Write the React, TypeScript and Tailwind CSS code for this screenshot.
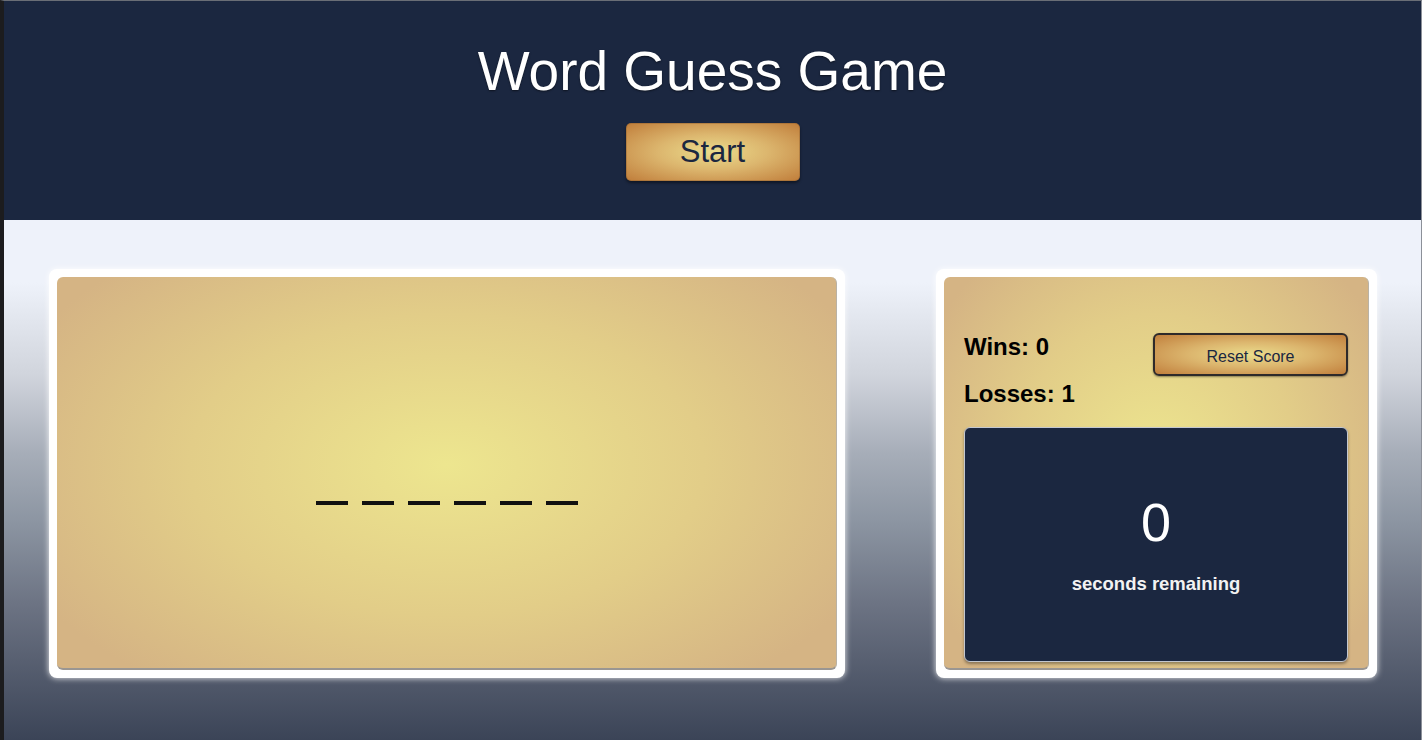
import { useState } from 'react';

const goldButton =
  'bg-[radial-gradient(ellipse_at_center,#ebdc8c_0%,#dcb66e_45%,#c17f3c_100%)]';

const panelGold =
  'bg-[radial-gradient(ellipse_60%_70%_at_50%_48%,#ede68f_0%,#e2cd88_55%,#d5b484_100%)]';

const App = () => {
  const [wins] = useState(0);
  const [losses] = useState(1);
  const [seconds] = useState(0);
  const letters = ['', '', '', '', '', ''];

  return (
    <div className="h-[740px] w-full overflow-hidden border-l-4 border-l-[#1c1c1e] border-t border-t-[#6a6e76] border-r border-r-[#8c9099] font-['Liberation_Sans',Arial,sans-serif] flex flex-col">
      {/* Header */}
      <header className="h-[219px] shrink-0 bg-[#1b2740] flex flex-col items-center pt-[39px]">
        <h1 className="text-[55px] leading-[1.15] text-white [text-shadow:0_1px_2px_rgba(0,0,0,0.5)]">
          Word Guess Game
        </h1>
        <button
          className={`mt-[20px] w-[174px] h-[58px] rounded-[5px] ${goldButton} text-[31px] text-[#1b2740] shadow-[0_2px_3px_rgba(0,0,0,0.45)] border border-[#8a5a2a]/40`}
        >
          Start
        </button>
      </header>

      {/* Body */}
      <main className="flex-1 bg-[linear-gradient(to_bottom,#eef2fa_0%,#eef2fa_12%,#d0d4dc_30%,#a6adb8_45%,#8c95a2_58%,#6c7383_74%,#3b4457_100%)] flex gap-[91px] pl-[45px] pr-[44px] pt-[49px]">
        {/* Word panel */}
        <div className="w-[796px] h-[409px] bg-white rounded-[8px] p-[8px] shadow-[0_0_6px_rgba(255,255,255,0.9)]">
          <div className={`h-full rounded-[6px] ${panelGold} border-b-2 border-b-[#9a9692] border-r border-r-[#b9b2a6] flex items-center justify-center`}>
            <div className="mt-[60px] flex gap-[14px]">
              {letters.map((l, i) => (
                <span key={i} className="w-[32px] h-[4px] bg-[#111111]">
                  {l}
                </span>
              ))}
            </div>
          </div>
        </div>

        {/* Score panel */}
        <div className="w-[441px] h-[409px] bg-white rounded-[8px] p-[8px] shadow-[0_0_6px_rgba(255,255,255,0.9)]">
          <div className={`h-full rounded-[6px] ${panelGold} border-b-2 border-b-[#9a9692] border-r border-r-[#b9b2a6] pt-[56px] pl-[20px] pr-[20px] pb-[6px] flex flex-col`}>
            <div className="flex justify-between items-start">
              <div className="flex flex-col gap-[19px] text-[24px] leading-[28px] font-bold text-black">
                <span>Wins: {wins}</span>
                <span>Losses: {losses}</span>
              </div>
              <button
                className={`w-[195px] h-[43px] rounded-[6px] ${goldButton} border-2 border-[#2e2a2a] text-[16px] text-[#1b2740] pt-[4px] shadow-[0_1px_2px_rgba(0,0,0,0.4)]`}
              >
                Reset Score
              </button>
            </div>
            <div className="mt-[19px] flex-1 rounded-[6px] bg-[#1b2740] border border-[#c3c7cf] shadow-[0_2px_3px_rgba(0,0,0,0.35)] flex flex-col items-center justify-center text-white">
              <span className="text-[54px] leading-none">{seconds}</span>
              <span className="mt-[24px] text-[18.5px] leading-[22px] font-bold text-[#f2f2f2]">
                seconds remaining
              </span>
            </div>
          </div>
        </div>
      </main>
    </div>
  );
};

export default App;
